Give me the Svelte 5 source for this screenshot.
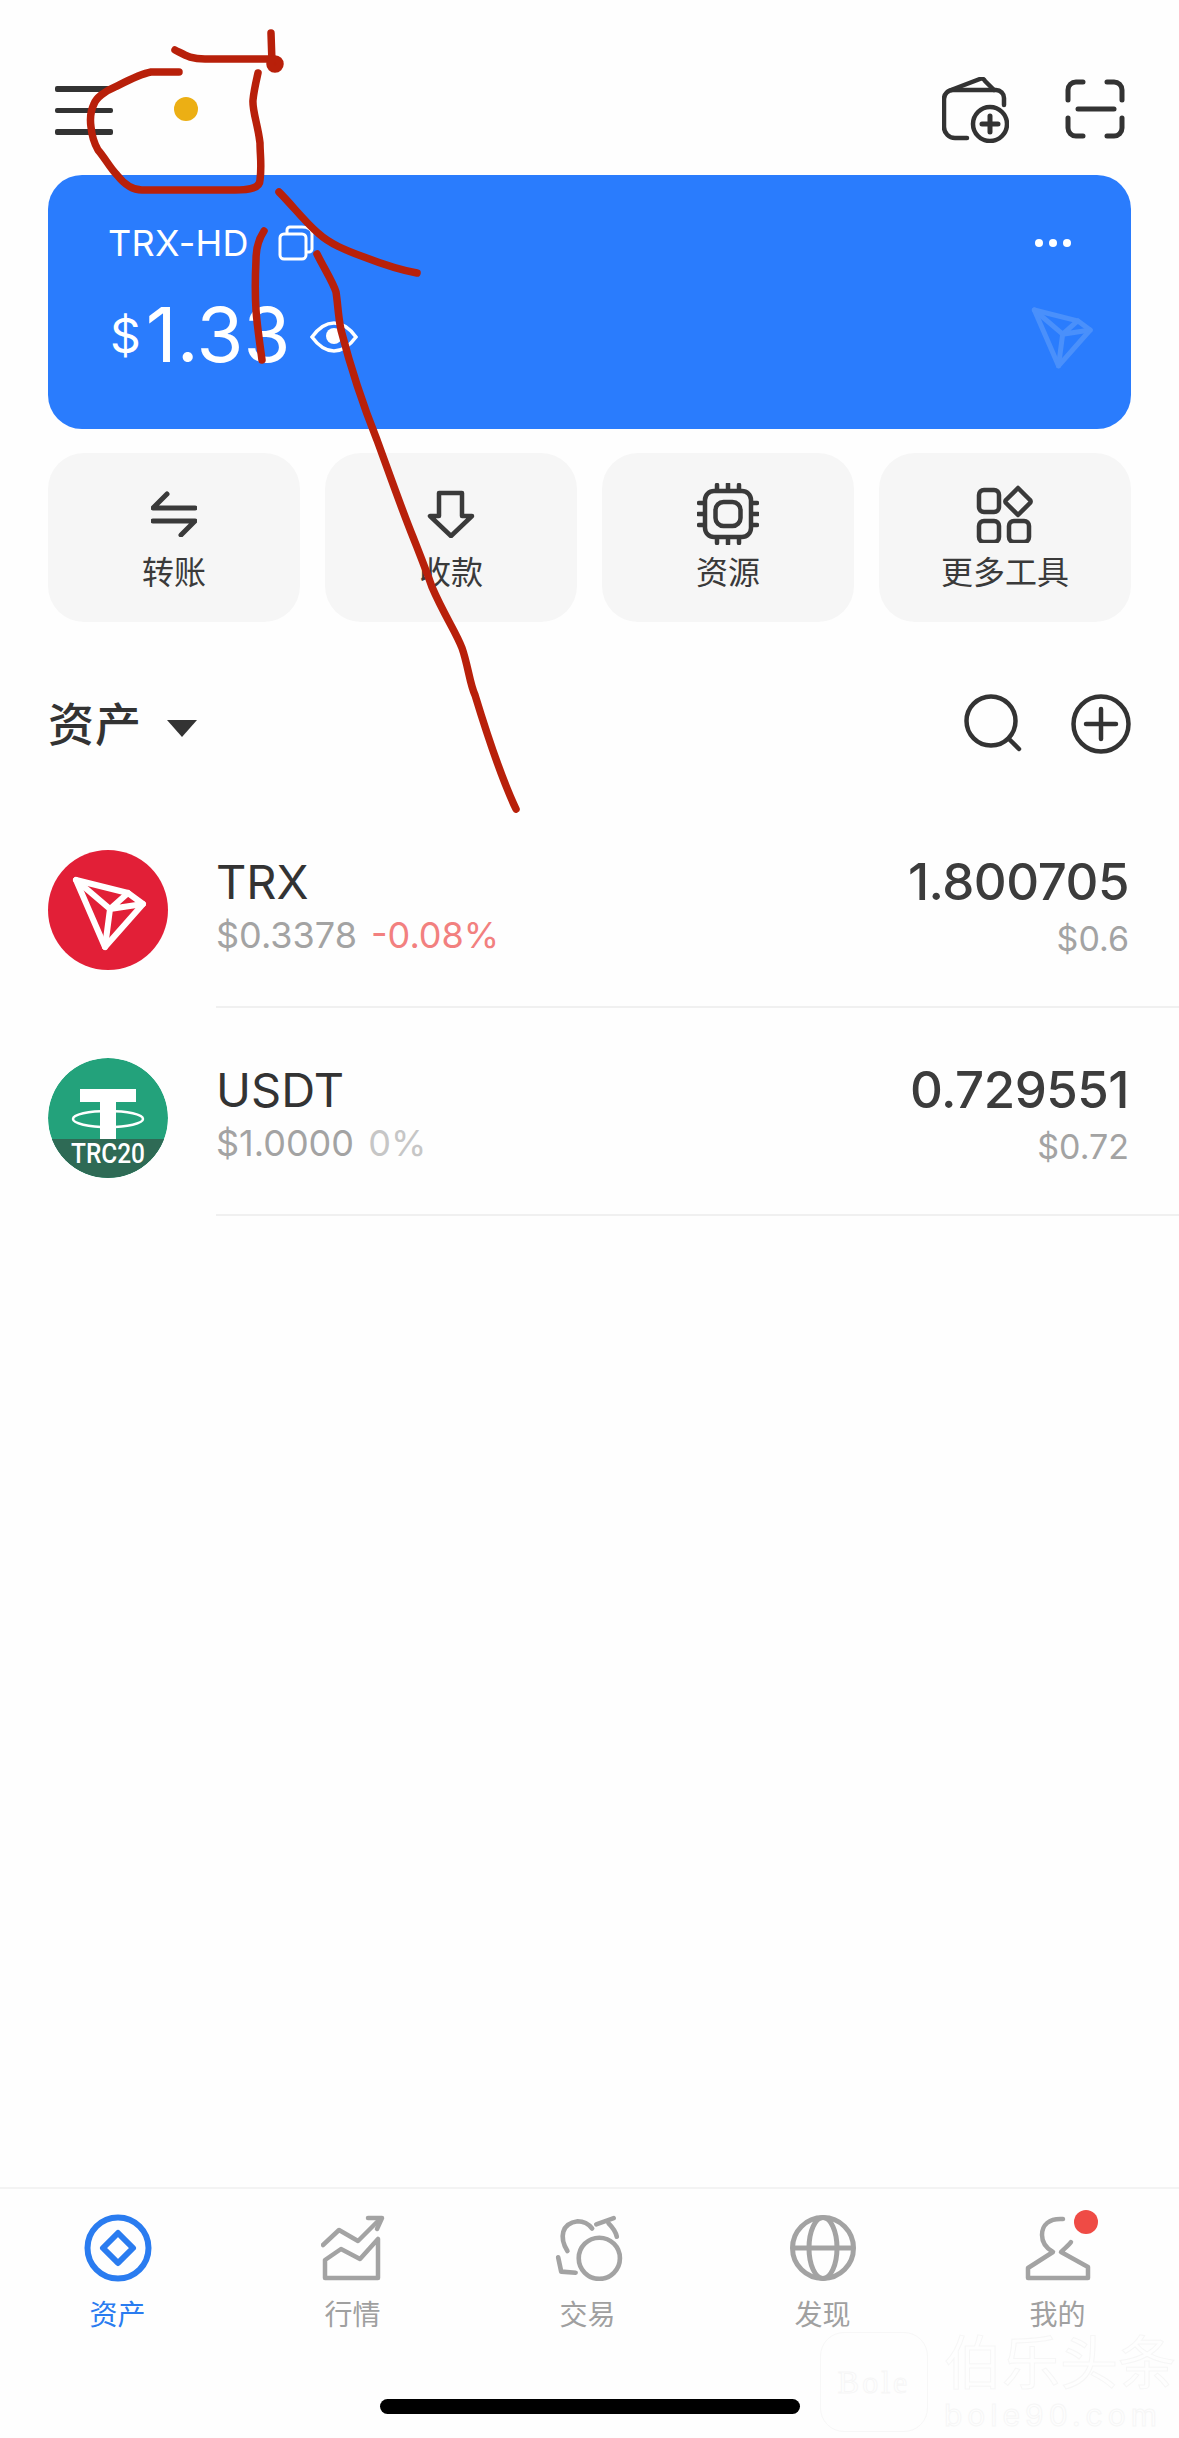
<script>
  const actions = [
    { key: 'transfer', label: '转账' },
    { key: 'receive', label: '收款' },
    { key: 'resource', label: '资源' },
    { key: 'more', label: '更多工具' }
  ];

  const tokens = [
    { key: 'trx', name: 'TRX', price: '$0.3378', change: '-0.08%', down: true, amount: '1.800705', value: '$0.6' },
    { key: 'usdt', name: 'USDT', price: '$1.0000', change: '0%', down: false, amount: '0.729551', value: '$0.72' }
  ];

  const tabs = [
    { key: 'assets', label: '资产' },
    { key: 'market', label: '行情' },
    { key: 'trade', label: '交易' },
    { key: 'discover', label: '发现' },
    { key: 'me', label: '我的' }
  ];
</script>

{#snippet tron(cls)}
  <svg class={cls} viewBox="0 0 120 120" fill="none" stroke="currentColor" stroke-width="5" stroke-linejoin="round" stroke-linecap="round">
    <path d="M28 30 L80 43 L95 54 L57 97 Z" />
    <path d="M28 30 L62 59 L57 97 M62 59 L95 54 M62 59 L80 43" />
  </svg>
{/snippet}

<div class="page">
  <header class="top">
    <div class="menu"><i></i><i></i><i></i></div>
    <span class="status-dot"></span>
    <div class="top-icons">
      <svg class="wallet" viewBox="0 0 67 66" fill="none" stroke="#333" stroke-width="4.5" stroke-linecap="round" stroke-linejoin="round">
        <path d="M25 61 H13 a11 11 0 0 1 -11 -11 V22 a9 9 0 0 1 9 -9 H54 a8 8 0 0 1 8 8 V28" />
        <path d="M9 13 L38 2 C40 1 42 2 43 4 L52 13" />
        <circle cx="48" cy="47" r="17" />
        <path d="M40 47 H56 M48 39 V55" stroke-width="5" />
      </svg>
      <svg class="scan" viewBox="0 0 60 60" fill="none" stroke="#333" stroke-width="5" stroke-linecap="round">
        <path d="M18 3 H11 a8 8 0 0 0 -8 8 V21 M42 3 H49 a8 8 0 0 1 8 8 V21 M18 57 H11 a8 8 0 0 1 -8 -8 V39 M42 57 H49 a8 8 0 0 0 8 -8 V39" />
        <path d="M13 30 H49" />
      </svg>
    </div>
  </header>

  <section class="card">
    <div class="card-head">
      <span class="wallet-name">TRX-HD</span>
      <svg class="copy" viewBox="0 0 36 36" fill="none" stroke="#fff" stroke-width="3" stroke-linejoin="round" stroke-linecap="round">
        <rect x="2" y="9" width="26" height="25" rx="4" />
        <path d="M9 8 V5 a3 3 0 0 1 3 -3 H24 C29 2 34 4 34 9 V24 a3 3 0 0 1 -3 3 H29" />
      </svg>
      <span class="more"><i></i><i></i><i></i></span>
    </div>
    <div class="card-body">
      <span class="dollar">$</span>
      <span class="balance">1.33</span>
      <svg class="eye" viewBox="0 0 48 32" fill="none" stroke="#fff" stroke-width="3.5">
        <path d="M2 16 C10 5 17 2 24 2 C31 2 38 5 46 16 C38 27 31 30 24 30 C17 30 10 27 2 16 Z" />
        <circle cx="24" cy="15" r="8" fill="#fff" stroke="none" />
      </svg>
      {@render tron('card-tron')}
    </div>
  </section>

  <nav class="actions">
    {#each actions as a}
      <div class="action">
        <div class="action-icon">
          {#if a.key === 'transfer'}
            <svg width="46" height="46" viewBox="0 0 46 46" fill="none" stroke="#3a3a3a" stroke-width="5" stroke-linecap="round" stroke-linejoin="round">
              <path d="M16 3 L2 17 H44 M2 30 H44 L30 44" />
            </svg>
          {:else if a.key === 'receive'}
            <svg width="48" height="48" viewBox="0 0 48 48" fill="none" stroke="#3a3a3a" stroke-width="4.5" stroke-linejoin="round">
              <path d="M12 3 H35 V26 H45 L24 46 L3 26 H12 Z" />
            </svg>
          {:else if a.key === 'resource'}
            <svg width="62" height="62" viewBox="0 0 62 62" fill="none" stroke="#3a3a3a" stroke-width="4.5" stroke-linecap="round">
              <rect x="8" y="8" width="46" height="46" rx="9" />
              <rect x="18.500" y="19" width="25" height="24" rx="8" />
              <path d="M20 2 V7 M31 1 V7 M42 2 V7 M20 55 V60 M31 55 V61 M42 55 V60 M2 20 H7 M1 31 H7 M2 42 H7 M55 20 H60 M55 31 H61 M55 42 H60" />
            </svg>
          {:else}
            <svg width="58" height="58" viewBox="0 0 58 58" fill="none" stroke="#3a3a3a" stroke-width="4.5" stroke-linejoin="round">
              <rect x="3" y="5" width="20" height="22" rx="5" />
              <rect x="3" y="36" width="20" height="21" rx="5" />
              <rect x="33" y="36" width="20" height="21" rx="5" />
              <path d="M42 3 L54 15 a2 2 0 0 1 0 3 L42 30 L30 18 a2 2 0 0 1 0 -3 Z" />
            </svg>
          {/if}
        </div>
        <span class="action-label">{a.label}</span>
      </div>
    {/each}
  </nav>

  <div class="assets-head">
    <span class="assets-title">资产</span>
    <span class="caret"></span>
    <div class="assets-tools">
      <svg class="search" viewBox="0 0 58 58" fill="none" stroke="#333" stroke-width="4.5" stroke-linecap="round">
        <circle cx="27" cy="27" r="24.500" />
        <path d="M45 45 L55 55" />
      </svg>
      <svg class="add" viewBox="0 0 60 60" fill="none" stroke="#333" stroke-width="4.5" stroke-linecap="round">
        <circle cx="30" cy="30" r="27.500" />
        <path d="M15 30 H45 M30 15 V45" />
      </svg>
    </div>
  </div>

  <ul class="tokens">
    {#each tokens as t}
      <li class="token">
        {#if t.key === 'trx'}
          <div class="avatar trx">{@render tron('trx-mark')}</div>
        {:else}
          <svg class="avatar" viewBox="0 0 120 120">
            <defs>
              <clipPath id="coin"><circle cx="60" cy="60" r="60" /></clipPath>
            </defs>
            <g clip-path="url(#coin)">
              <rect width="120" height="120" fill="#23a27b" />
              <path d="M32 31 H88 V44 H68 V82 H52 V44 H32 Z" fill="#fff" />
              <ellipse cx="60" cy="61" rx="35" ry="8" fill="none" stroke="#fff" stroke-width="2.500" />
              <rect y="81" width="120" height="39" fill="#2e6a55" />
              <text x="60" y="105" text-anchor="middle" textLength="74" lengthAdjust="spacingAndGlyphs" class="trc">TRC20</text>
            </g>
          </svg>
        {/if}
        <div class="token-main">
          <div class="token-left">
            <span class="token-name">{t.name}</span>
            <span class="token-sub">
              <span class="price">{t.price}</span>
              <span class="change" class:down={t.down}>{t.change}</span>
            </span>
          </div>
          <div class="token-right">
            <span class="amount">{t.amount}</span>
            <span class="value">{t.value}</span>
          </div>
        </div>
      </li>
    {/each}
  </ul>

  <div class="spacer"></div>

  <footer class="tabbar">
    {#each tabs as tab, i}
      <div class="tab" class:active={i === 0}>
        <div class="tab-icon">
          {#if tab.key === 'assets'}
            <svg width="68" height="68" viewBox="0 0 68 68" fill="none" stroke="#2a7cf0" stroke-width="6" stroke-linejoin="round">
              <circle cx="34" cy="34" r="30.500" />
              <path d="M34 19 L49 34 L34 49 L19 34 Z" stroke-width="6" />
            </svg>
          {:else if tab.key === 'market'}
            <svg width="64" height="66" viewBox="0 0 64 66" fill="none" stroke="#a3a3a3" stroke-width="4.500" stroke-linejoin="round" stroke-linecap="round">
              <path d="M2 30 L18 15 L37 26 L58 5" />
              <path d="M47 3 H61 L56 14" />
              <path d="M4 63 V45 L20 34 L39 44 L57 24 V63 Z" />
            </svg>
          {:else if tab.key === 'trade'}
            <svg width="70" height="66" viewBox="12 12 68 64" fill="none" stroke="#a3a3a3" stroke-width="4.500" stroke-linecap="round" stroke-linejoin="round">
              <circle cx="57" cy="54" r="20" />
              <path d="M26 47 C18 34 20 20 36 18 C42 18 46 20 50 25" />
              <path d="M17 53 L20 67 L34 68" />
              <path d="M54 21 L71 15 M66 20 C70 24 73 28 74 33" />
            </svg>
          {:else if tab.key === 'discover'}
            <svg width="66" height="66" viewBox="0 0 66 66" fill="none" stroke="#a3a3a3" stroke-width="5">
              <circle cx="33" cy="33" r="30.500" />
              <ellipse cx="33" cy="33" rx="14" ry="30.500" />
              <path d="M3 33 H63" />
            </svg>
          {:else}
            <svg width="70" height="66" viewBox="0 0 70 66" fill="none" stroke="#a3a3a3" stroke-width="4.500" stroke-linecap="round" stroke-linejoin="round">
              <path d="M40 4 C26 3 19 10 19 20 C19 28 23 33 30 37 L5 53 V63 H65 V52 L38 37 C42 33 46 30 48 27" />
            </svg>
            <span class="badge"></span>
          {/if}
        </div>
        <span class="tab-label">{tab.label}</span>
      </div>
    {/each}
  </footer>

  <div class="home-wrap"><span class="home-bar"></span></div>

  <!-- faint site watermark in the bottom right corner -->
  <div class="watermark">
    <div class="wm-logo">Bole</div>
    <div class="wm-text">
      <span class="wm-cn">伯乐头条</span>
      <span class="wm-en">bole90.com</span>
    </div>
  </div>

  <!-- hand drawn red annotation over the screenshot -->
  <svg class="scribble" viewBox="0 0 1179 2438" fill="none" stroke="#b8200a" stroke-width="7.500" stroke-linecap="round" stroke-linejoin="round">
    <path d="M175 50 C185 55 190 59 205 59 L272 59 M271 33 L272 63" />
    <circle cx="275" cy="64" r="5" fill="#b8200a" />
    <path d="M179 72 L151 72 C140 74 125 82 115 87 C105 91 96 98 94 104 C90 112 90 120 91 127 C92 137 94 143 98 150 C105 158 110 168 117 175 C124 184 132 190 142 190 L235 190 C250 190 260 188 260 180 C262 165 260 155 260 143 C258 125 252 110 253 100 C254 90 256 82 258 73" />
    <path d="M279 192 C292 205 305 222 318 233 C330 244 345 250 364 257 C382 264 400 270 417 273" />
    <path d="M264 231 C258 240 256 248 256 260 C255 280 255 295 256 310 C257 325 260 345 262 360" />
    <path d="M317 254 C325 270 333 282 336 292 C338 305 338 315 341 330 C350 365 365 410 377 440 C388 470 402 510 413 537 C420 555 426 570 432 587 C444 615 456 632 462 648 C468 665 470 685 475 695 C482 718 500 775 516 809" />
  </svg>
</div>

<style>
  :global(body) {
    background: #fefefe;
  }
  .page {
    position: relative;
    width: 1179px;
    height: 2438px;
    display: flex;
    flex-direction: column;
    overflow: hidden;
    color: #333;
    font-family: Inter, "Noto Sans CJK SC", sans-serif;
  }

  .top {
    height: 175px;
    padding: 77px 54px 0 55px;
    box-sizing: border-box;
    display: flex;
    align-items: flex-start;
    flex-shrink: 0;
  }
  .menu {
    width: 58px;
    margin-top: 9px;
    display: flex;
    flex-direction: column;
    gap: 16px;
  }
  .menu i {
    display: block;
    height: 5.500px;
    background: #333;
    border-radius: 2px;
  }
  .status-dot {
    width: 24px;
    height: 24px;
    margin: 20px 0 0 61px;
    border-radius: 50%;
    background: #ecaf14;
  }
  .top-icons {
    margin-left: auto;
    display: flex;
    gap: 56px;
  }
  .wallet {
    width: 67px;
    height: 66px;
  }
  .scan {
    width: 60px;
    height: 60px;
    margin-top: 2px;
  }

  .card {
    margin: 0 48px;
    height: 254px;
    border-radius: 34px;
    background: #2a7cfd;
    color: #fff;
    padding: 50px 60px 0 60px;
    box-sizing: border-box;
    flex-shrink: 0;
  }
  .card-head {
    display: flex;
    align-items: center;
    height: 36px;
  }
  .wallet-name {
    font-size: 36px;
    line-height: 36px;
    letter-spacing: 0.3px;
  }
  .copy {
    width: 36px;
    height: 36px;
    margin-left: 29px;
  }
  .more {
    margin-left: auto;
    display: flex;
    gap: 6px;
  }
  .more i {
    width: 8px;
    height: 8px;
    border-radius: 50%;
    background: #fff;
  }
  .card-body {
    margin-top: 31px;
    display: flex;
    align-items: center;
    height: 84px;
  }
  .dollar {
    font-size: 48px;
    margin: 3px 5px 0 2px;
  }
  .balance {
    font-size: 76px;
    line-height: 84px;
  }
  .eye {
    width: 48px;
    height: 32px;
    margin: 6px 0 0 20px;
  }
  .card-body :global(.card-tron) {
    width: 100px;
    height: 100px;
    margin: 2px -40px 0 auto;
    color: #4a90fb;
    stroke-width: 6;
  }

  .actions {
    margin: 24px 48px 0;
    display: grid;
    grid-template-columns: repeat(4, 1fr);
    gap: 25px;
    flex-shrink: 0;
  }
  .action {
    height: 169px;
    border-radius: 36px;
    background: #f6f6f6;
    display: flex;
    flex-direction: column;
    align-items: center;
  }
  .action-icon {
    height: 62px;
    margin-top: 30px;
    display: flex;
    align-items: center;
    justify-content: center;
  }
  .action-label {
    margin-top: 6px;
    font-size: 32px;
    line-height: 44px;
    color: #3a3a3a;
  }

  .assets-head {
    margin: 72px 48px 0;
    height: 60px;
    display: flex;
    align-items: center;
    flex-shrink: 0;
  }
  .assets-title {
    font-size: 46px;
    font-weight: 500;
    line-height: 60px;
    letter-spacing: 1px;
  }
  .caret {
    width: 0;
    height: 0;
    margin: 8px 0 0 25px;
    border-left: 15px solid transparent;
    border-right: 15px solid transparent;
    border-top: 17px solid #333;
  }
  .assets-tools {
    margin-left: auto;
    display: flex;
    gap: 49px;
  }
  .search {
    width: 58px;
    height: 58px;
  }
  .add {
    width: 60px;
    height: 60px;
  }

  .tokens {
    list-style: none;
    margin: 46px 0 0;
    padding: 0;
    flex-shrink: 0;
  }
  .token {
    display: flex;
    padding-left: 48px;
    gap: 48px;
  }
  .avatar {
    width: 120px;
    height: 120px;
    margin-top: 50px;
    flex-shrink: 0;
    border-radius: 50%;
  }
  .avatar.trx {
    background: #e21f37;
    color: #fff;
  }
  .avatar :global(.trx-mark) {
    display: block;
    width: 120px;
    height: 120px;
    stroke-width: 6;
  }
  .trc {
    font-family: Roboto, sans-serif;
    font-size: 28px;
    font-weight: 500;
    fill: #fff;
  }
  .token-main {
    flex: 1;
    height: 208px;
    padding: 59px 50px 0 0;
    box-sizing: border-box;
    border-bottom: 2px solid #f0f0f0;
    display: flex;
    justify-content: space-between;
  }
  .token-left,
  .token-right {
    display: flex;
    flex-direction: column;
  }
  .token-right {
    align-items: flex-end;
  }
  .token-name,
  .amount {
    font-size: 47px;
    line-height: 46px;
  }
  .amount {
    font-size: 51px;
    font-weight: 500;
    letter-spacing: -0.5px;
    color: #3c3c3c;
  }
  .token-sub,
  .value {
    margin-top: 9px;
    font-size: 36px;
    line-height: 42px;
    color: #a3a3a3;
  }
  .value {
    margin-top: 13px;
    font-size: 34px;
  }
  .change {
    margin-left: 4px;
    color: #c6c6c6;
  }
  .change.down {
    color: #f2807f;
  }

  .spacer {
    flex: 1;
  }

  .tabbar {
    border-top: 2px solid #f3f3f3;
    height: 166px;
    box-sizing: border-box;
    padding: 25px 4px 0 0;
    display: flex;
    flex-shrink: 0;
  }
  .tab {
    flex: 1;
    display: flex;
    flex-direction: column;
    align-items: center;
    color: #a0a0a0;
  }
  .tab.active {
    color: #2a7cf0;
  }
  .tab-icon {
    position: relative;
    height: 68px;
    display: flex;
    align-items: center;
    justify-content: center;
  }
  .badge {
    position: absolute;
    top: -4px;
    right: -5px;
    width: 24px;
    height: 24px;
    border-radius: 50%;
    background: #ef4b45;
  }
  .tab-label {
    margin-top: 18px;
    font-size: 28px;
    line-height: 30px;
  }

  .home-wrap {
    height: 85px;
    display: flex;
    justify-content: center;
    flex-shrink: 0;
  }
  .home-bar {
    width: 420px;
    height: 15px;
    margin-top: 46px;
    border-radius: 8px;
    background: #000;
  }

  .watermark {
    position: absolute;
    left: 820px;
    top: 2332px;
    display: flex;
    gap: 16px;
    color: transparent;
    -webkit-text-stroke: 1px #f6f6f6;
  }
  .wm-logo {
    width: 108px;
    height: 100px;
    border: 1px solid #f7f7f7;
    border-radius: 24px;
    box-sizing: border-box;
    display: flex;
    align-items: center;
    justify-content: center;
    font-family: "Liberation Serif", serif;
    font-size: 32px;
    letter-spacing: 3px;
  }
  .wm-text {
    display: flex;
    flex-direction: column;
  }
  .wm-cn {
    font-size: 58px;
    line-height: 62px;
    white-space: nowrap;
  }
  .wm-en {
    margin-top: 6px;
    font-size: 30px;
    line-height: 30px;
    letter-spacing: 5px;
    white-space: nowrap;
  }

  .scribble {
    position: absolute;
    left: 0;
    top: 0;
    width: 1179px;
    height: 2438px;
    pointer-events: none;
  }
</style>
